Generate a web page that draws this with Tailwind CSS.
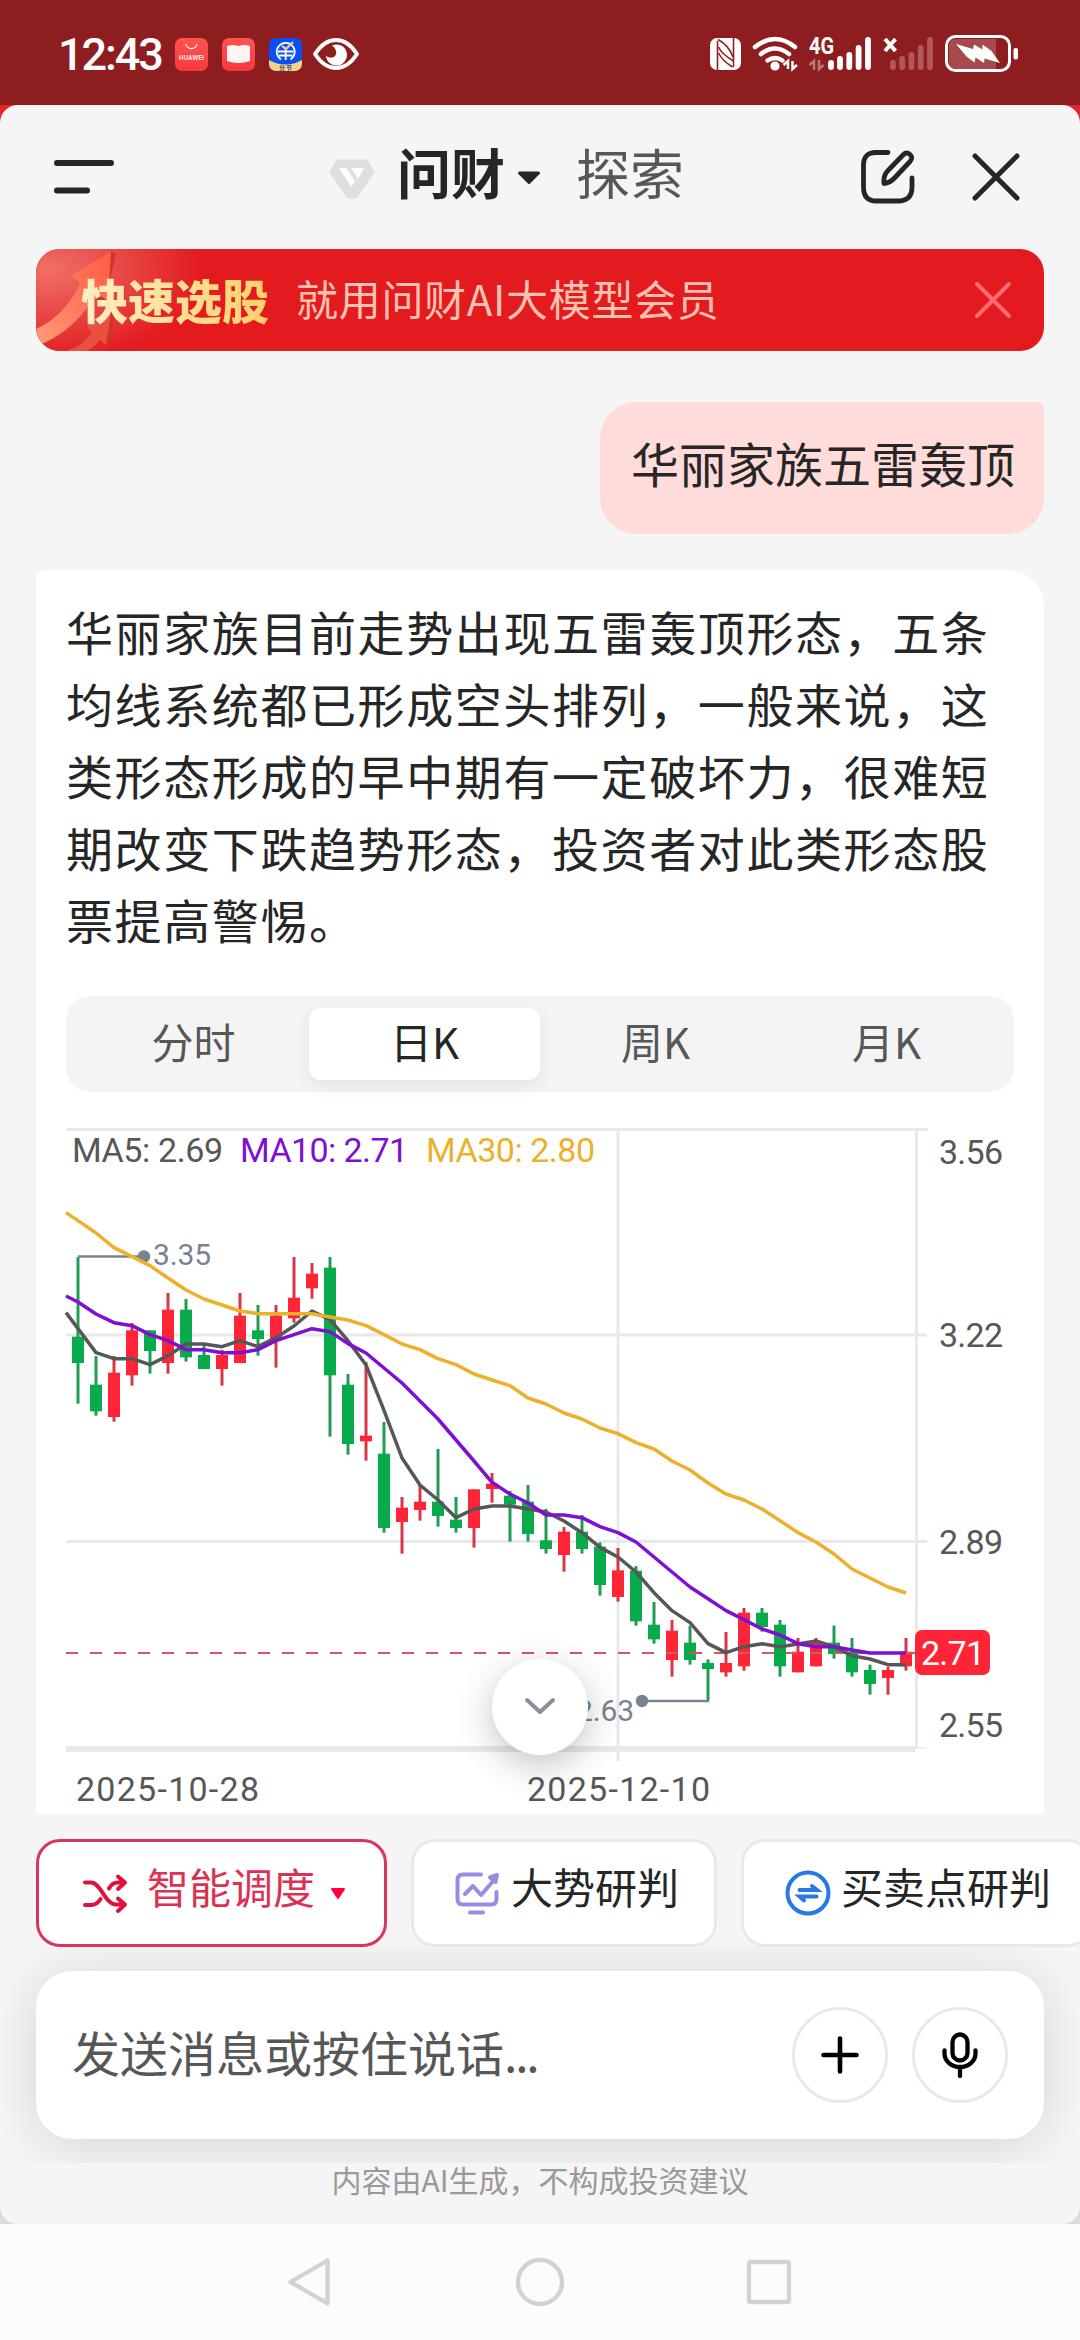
<!DOCTYPE html>
<html lang="zh-CN">
<head>
<meta charset="utf-8">
<title>问财</title>
<script src="https://cdn.jsdelivr.net/npm/@tailwindcss/browser@4"></script>
</head>
<body class="w-[1080px] h-[2340px] overflow-hidden bg-[#fcfcfc] font-['Noto_Sans_CJK_SC',sans-serif] text-[#262626] flex flex-col">

<!-- status bar -->
<header class="h-[105px] shrink-0 bg-[#8e1d20] text-white flex items-start justify-between pl-[58px] pr-[62px] pt-[32px]">
  <div class="flex items-center h-[44px]">
    <span class="w-[117px] shrink-0 font-[Roboto] font-medium text-[45px] leading-[45px] tracking-[-2.100px] whitespace-nowrap">12:43</span>
    <svg width="33" height="33" viewBox="0 0 33 33" class="shrink-0">
      <defs><linearGradient id="hw" x1="0" y1="0" x2="0" y2="1"><stop offset="0" stop-color="#ff5450"/><stop offset="1" stop-color="#f73840"/></linearGradient></defs>
      <rect width="33" height="33" rx="7" fill="url(#hw)"/><path d="M11 6a5.6 5.6 0 0 0 11 0" fill="none" stroke="#fff" stroke-width="1.2"/>
      <text x="4" y="21.500" font-family="Inter" font-weight="600" font-size="6" textLength="25" fill="#fff">HUAWEI</text>
    </svg>
    <svg width="33" height="33" viewBox="0 0 33 33" class="ml-[14px] shrink-0"><rect width="33" height="33" rx="7" fill="url(#hw)"/><path d="M5 8q6-2 11.500 0q6-2 11.500 0v15q-5 2-11.500 2q-6.500 0-11.500-2z" fill="#fff5f5"/></svg>
    <svg width="33" height="33" viewBox="0 0 33 33" class="ml-[14px] shrink-0">
      <clipPath id="bk"><rect width="33" height="33" rx="7"/></clipPath>
      <g clip-path="url(#bk)"><rect width="33" height="33" fill="#0b4ef2"/><path d="M0 22q16.500 9 33 0v11H0z" fill="#f7d486"/></g>
      <path d="M12 21.500a9 9 0 1 1 9.500 0M9 13.500h15.500M10 17.500h13.500M16.700 10v12" fill="none" stroke="#fff" stroke-width="1.800"/><path d="M13 8l4 3 7-7" fill="none" stroke="#e8cd8d" stroke-width="2.200"/>
      <text x="10" y="31.500" font-size="6" font-weight="700" textLength="13" fill="#34528e">分节</text>
    </svg>
    <svg width="46" height="32" viewBox="0 0 46 32" class="ml-[11px] shrink-0"><path d="M2 16Q11 2 23 2T44 16Q35 30 23 30T2 16Z" fill="none" stroke="#fff" stroke-width="3.800" stroke-linejoin="round"/><path d="M19 7.500A10.500 10.500 0 1 1 13 18q4 3 8 1q3.500-3 1.500-7.500q-1-2.500-3.500-4z" fill="#fff"/></svg>
  </div>
  <svg width="308" height="44" viewBox="710 32 308 44" class="shrink-0">
    <rect x="710" y="38" width="31" height="32" rx="7" fill="#fff"/>
    <path d="M717.500 41v29M733.500 38v29" stroke="#8e1d20" stroke-width="1.600"/>
    <path d="M718 39.500q11 6 15 17.500M718.500 47q3 7 15 14M718.500 53q4 8 14 14" stroke="#8e1d20" stroke-width="1.600" fill="none"/>
    <g fill="none" stroke="#fff" stroke-width="4.500" stroke-linecap="round"><path d="M755 47q20-16 40 0"/><path d="M761 54q14-11 28 0"/><path d="M767.500 60.500q7.500-5 15 0"/></g>
    <circle cx="775" cy="66" r="4.600" fill="#fff"/>
    <path d="M788 69v-8l-4.500 4M792.500 61v8l4.500-4" fill="none" stroke="#fff" stroke-width="2.500"/>
    <text x="809" y="54" font-family="Roboto" font-weight="700" font-size="23" textLength="25" lengthAdjust="spacingAndGlyphs" fill="#fff">4G</text>
    <path d="M814 70v-9l-4.500 4M819 60v9l4.500-4" fill="none" stroke="#fff" stroke-opacity=".4" stroke-width="2.500"/>
    <g stroke="#fff" stroke-width="5.800" stroke-linecap="round"><path d="M831 63v4M840 59v8M849.300 55v12M858.600 48v19M868 40v27"/><path stroke="#b1585b" d="M893 63v4M902.200 59v8M911.500 55v12M920.700 48v19M930 40v27"/></g>
    <path d="M885 39l10.500 12M895.500 39L885 51" stroke="#fff" stroke-width="4"/>
    <path d="M956 39h40v30h-40q-7 0-7-7V46q0-7 7-7z" fill="#a74a4e"/>
    <rect x="946.500" y="36.500" width="63" height="34" rx="9" fill="none" stroke="#fff" stroke-width="3"/>
    <rect x="1013.500" y="48" width="4.500" height="11.500" rx="2" fill="#fff"/>
    <path d="M956 44l17 5 1-4.500 8.500 5v-5l9 6.500 8.500 12-15.500-4.500-.5 4.500-8.500-5.500-1 5-8-6z" fill="#fff"/>
  </svg>
</header>

<div class="h-[2119px] shrink-0 bg-[linear-gradient(#e5252c_0_40px,#dcdcdc_40px)]">
<main class="h-full rounded-[18px] overflow-hidden bg-[#f5f5f5] flex flex-col">

  <!-- title bar -->
  <nav class="h-[144px] shrink-0 flex items-center pl-[54px] pr-[60px]">
    <svg width="60" height="34" viewBox="0 0 60 34" class="shrink-0"><path d="M3 3h54M3 30.500h30" stroke="#262626" stroke-width="6" stroke-linecap="round"/></svg>
    <svg width="46" height="40" viewBox="0 0 46 40" class="ml-[215px] mt-[4px] shrink-0"><path d="M9 3h28l6 10-17 24h-6L3 13z" fill="#dfdfdf" stroke="#dfdfdf" stroke-width="5" stroke-linejoin="round"/><path d="M10 9h7l9 13-3.500 6zM22 9h13l-6 11z" fill="#fff"/></svg>
    <h1 class="ml-[22px] text-[54px] leading-[80px] font-bold w-[109px] whitespace-nowrap -mt-[10px]">问财</h1>
    <svg width="24" height="14" viewBox="0 0 24 14" class="ml-[11px] mt-[1px] shrink-0"><path d="M2.500 2h19L12 11.500z" fill="#262626" stroke="#262626" stroke-width="3" stroke-linejoin="round"/></svg>
    <span class="ml-[35px] text-[54px] leading-[80px] text-[#575757] whitespace-nowrap -mt-[11px]">探索</span>
    <svg width="56" height="56" viewBox="0 0 56 56" fill="none" stroke="#262626" stroke-width="4.800" stroke-linecap="round" class="ml-auto shrink-0"><path d="M28 3.500H16Q3.500 3.500 3.500 16v22Q3.500 52 16 52h22q14 0 14-14V29"/><path d="M24 34.500q-1-8 4-13L43.500 5.500q3-3 6.500 0t0 7L35 28.500q-5 5.500-11 6z" stroke-linejoin="round"/></svg>
    <svg width="48" height="48" viewBox="0 0 48 48" class="ml-[56px] shrink-0"><path d="M3 3l42 42M45 3L3 45" stroke="#262626" stroke-width="5" stroke-linecap="round"/></svg>
  </nav>

  <!-- promo banner -->
  <section class="relative mx-[36px] h-[102px] shrink-0 rounded-[24px] overflow-hidden bg-[#e31b1f] flex items-center pl-[45px] pr-[32px]">
    <svg width="170" height="102" viewBox="0 0 170 102" class="absolute left-0 top-0">
      <defs>
        <radialGradient id="glow" cx=".08" cy=".2" r=".9"><stop offset="0" stop-color="#f07066"/><stop offset=".45" stop-color="#e84a48"/><stop offset="1" stop-color="#e31b1f"/></radialGradient>
        <linearGradient id="arr" x1="0" y1="1" x2="1" y2="0"><stop offset="0" stop-color="#ff9a78"/><stop offset="1" stop-color="#ff5a41"/></linearGradient>
      </defs>
      <rect width="170" height="102" fill="url(#glow)"/>
      <path d="M7 96Q32 82 54 45l14 12 12-52-5-3z" fill="#c9382a"/>
      <path d="M0 80Q30 66 44 34l-9-7L75 2l-3 50-11-8Q40 80 6 95L0 88z" fill="url(#arr)"/>
      <path d="M30 102q15-4 26-18l-5-6 26-24-7 42-6-5q-7 8-13 11z" fill="#e9503e"/><path d="M70 95l3-1 8-40-4 0z" fill="#c9382a"/>
    </svg>
    <b class="relative font-black text-[47px] leading-[60px] -mt-[3px] bg-[linear-gradient(90deg,#ffefc4,#ffd06a)] bg-clip-text text-transparent whitespace-nowrap">快速选股</b>
    <span class="ml-[27px] -mt-[4px] text-[42px] leading-[60px] tracking-[0.700px] text-[#ffc2b0] whitespace-nowrap">就用问财AI大模型会员</span>
    <svg width="38" height="38" viewBox="0 0 38 38" class="ml-auto"><path d="M3 3l32 32M35 3L3 35" stroke="#ff6b72" stroke-width="4" stroke-linecap="round"/></svg>
  </section>

  <!-- user message -->
  <div class="mt-[51px] mr-[36px] self-end w-[444px] h-[132px] shrink-0 rounded-[36px] rounded-tr-[6px] bg-[#ffdbda] pl-[31px] text-[48px] leading-[121px] whitespace-nowrap">华丽家族五雷轰顶</div>

  <!-- reply card -->
  <article class="relative mt-[36px] mx-[36px] h-[1244px] shrink-0 bg-white rounded-tl-[6px] rounded-tr-[36px]">
    <p class="pt-[25px] pl-[30px] text-[47px] leading-[72px] tracking-[1.600px] whitespace-nowrap">华丽家族目前走势出现五雷轰顶形态，五条<br>均线系统都已形成空头排列，一般来说，这<br>类形态形成的早中期有一定破坏力，很难短<br>期改变下跌趋势形态，投资者对此类形态股<br>票提高警惕。</p>
    <div class="mt-[41px] mx-[30px] h-[96px] rounded-[24px] bg-[#f4f4f4] p-[12px] grid grid-cols-4 text-center text-[42px] leading-[65px] text-[#575757]">
      <span>分时</span><span class="rounded-[12px] bg-white text-[#262626] shadow-[0_6px_18px_rgba(0,0,0,0.07)]">日K</span><span>周K</span><span>月K</span>
    </div>
    <svg id="chart" width="1008" height="712" viewBox="36 1102 1008 712" class="mt-[10px] block" font-family="Roboto" fill="none">
      <g stroke="#e9e9e9" stroke-width="3">
        <path d="M66 1129.500H928M66 1335H927M66 1541.500H927M618 1129V1761M916.500 1129V1748"/>
        <path d="M66 1749H915" stroke-width="6"/><path d="M915 1748h12" stroke-width="1.500"/>
      </g>
      <g id="candles"></g>
      <g stroke="#788392" stroke-width="2.500" fill="#788392"><path d="M78 1256.500h66"/><circle cx="144" cy="1256.500" r="5"/><path d="M642 1701h67"/><circle cx="642" cy="1701" r="5"/></g>
      <path d="M66 1653H915" stroke="#d75460" stroke-width="2" stroke-dasharray="12 12"/>
      <g id="averages" stroke-width="3.500" stroke-linejoin="round"></g>
      <g font-size="30" fill="#788392"><text x="153" y="1265" textLength="58">3.35</text><text x="576" y="1720.500" textLength="58">2.63</text></g>
      <rect x="915" y="1630" width="75" height="45" rx="7" fill="#ff2436"/>
      <g font-size="34" fill="#575757">
        <text x="72" y="1162" textLength="151">MA5: 2.69</text>
        <text x="240" y="1162" textLength="168" fill="#7f0fd2">MA10: 2.71</text>
        <text x="426" y="1162" textLength="169" fill="#edb02b">MA30: 2.80</text>
        <text x="939" y="1164" textLength="64">3.56</text><text x="939" y="1347" textLength="64">3.22</text>
        <text x="939" y="1554" textLength="64">2.89</text><text x="939" y="1737" textLength="64">2.55</text>
        <text x="921" y="1665" textLength="64" fill="#fff">2.71</text>
        <text x="76" y="1801" textLength="183">2025-10-28</text><text x="527" y="1801" textLength="183">2025-12-10</text>
      </g>
    </svg>
    <button class="absolute left-[456px] top-[1089px] w-[96px] h-[96px] rounded-full bg-white shadow-[0_10px_36px_rgba(0,0,0,0.24)] flex items-center justify-center"><svg width="32" height="20" viewBox="0 0 32 20"><path d="M3 3l13 12L29 3" fill="none" stroke="#8a8f99" stroke-width="4" stroke-linecap="round" stroke-linejoin="round"/></svg></button>
  </article>

  <!-- quick actions -->
  <div class="pt-[25px] pl-[36px] flex gap-[24px] shrink-0 text-[42px] leading-[88px] whitespace-nowrap overflow-hidden">
    <div class="box-border w-[351px] h-[108px] shrink-0 rounded-[24px] border-3 border-[#d8365a] bg-white flex text-[#dc3150] pl-[43px]">
      <svg width="46" height="42" viewBox="0 0 46 42" class="mt-[31px] shrink-0" fill="none" stroke="#e0103f" stroke-width="4" stroke-linecap="round" stroke-linejoin="round"><path d="M3 9.500h6c10 0 14 22 25 22h8M3 32h6q6 0 9.500-6M27 15.500q3-6 9-6h6M36 3.500l7 6-7 6.500M36 25.500l7 6-7 6.500"/></svg>
      <span class="ml-[19px] w-[166px]">智能调度</span>
      <svg width="16" height="13" viewBox="0 0 16 13" class="ml-[17px] mt-[45px] shrink-0"><path d="M2 2h12L8 11z" fill="#ff003c" stroke="#ff003c" stroke-width="2" stroke-linejoin="round"/></svg>
    </div>
    <div class="w-[306px] h-[108px] shrink-0 rounded-[24px] border-3 border-[#e9e9e9] bg-white flex pl-[41px]">
      <svg width="45" height="44" viewBox="0 0 45 44" class="mt-[29px] shrink-0" fill="none" stroke="#988be2" stroke-width="4" stroke-linecap="round" stroke-linejoin="round"><path d="M26 3.500H8Q2.500 3.500 2.500 9v19q0 5.500 5.500 5.500h28q5.500 0 5.500-5.500v-7M15 41.500h13M10 23l8-8 8 9L40 8"/><path d="M42 4l-1.500 7-5.500-4.500z" fill="#988be2"/></svg>
      <span class="ml-[11px]">大势研判</span>
    </div>
    <div class="w-[351px] h-[108px] shrink-0 rounded-[24px] border-3 border-[#e9e9e9] bg-white flex pl-[41px]">
      <svg width="46" height="46" viewBox="0 0 46 46" class="mt-[28px] shrink-0" fill="none" stroke="#2878e6" stroke-width="4" stroke-linecap="round"><circle cx="23" cy="23" r="20.500"/><path d="M14.500 20h17.500l-5-4M31.500 26.500H14.500l4.500 4"/></svg>
      <span class="ml-[10px]">买卖点研判</span>
    </div>
  </div>

  <!-- composer -->
  <div class="h-[216px] shrink-0 overflow-hidden px-[36px] py-[24px]">
    <div class="h-[168px] rounded-[36px] bg-white shadow-[0_6px_54px_rgba(0,0,0,0.13)] flex items-center gap-[24px] pl-[36px] pr-[36px]">
      <span class="flex-1 text-[48px] leading-[72px] text-[#575757] whitespace-nowrap -mt-[8px]">发送消息或按住说话<span class="tracking-[-2.200px]">...</span></span>
      <button class="w-[96px] h-[96px] rounded-full border-3 border-[#e9e9e9] flex items-center justify-center"><svg width="38" height="38" viewBox="0 0 38 38"><path d="M19 2.500v33M2.500 19h33" stroke="#000" stroke-width="4.600" stroke-linecap="round"/></svg></button>
      <button class="w-[96px] h-[96px] rounded-full border-3 border-[#e9e9e9] flex items-center justify-center"><svg width="36" height="46" viewBox="0 0 36 46" fill="none" stroke="#000" stroke-width="4.300" stroke-linecap="round"><rect x="10.500" y="2.500" width="15" height="26" rx="7.500"/><path d="M2.500 18.500v3a15.500 13.500 0 0 0 31 0v-3M18 36v8"/></svg></button>
    </div>
  </div>
  <p class="text-center text-[30px] leading-[33px] text-[#999]">内容由AI生成，不构成投资建议</p>
</main>
</div>

<!-- system navigation -->
<footer class="flex-1 flex items-center justify-center">
  <svg width="504" height="50" viewBox="288 2257 504 50" fill="none" stroke="#d2d2d2" stroke-width="4.300" stroke-linejoin="round"><path d="M290.500 2282L327.500 2260.500V2303.500Z"/><circle cx="540" cy="2282" r="22"/><rect x="749" y="2262" width="40" height="40" rx="1.500"/></svg>
</footer>

<script>
const ns = 'http://www.w3.org/2000/svg';
const X = i => 78 + 18 * i, Y = v => 1110 + v / 3;
const add = (id, tag, a) => { const e = document.createElementNS(ns, tag); for (const k in a) e.setAttribute(k, a[k]); document.getElementById(id).append(e); };
// direction, high, low, body top, body bottom
const candles = [
['g',441,881,680,759],['g',738,917,824,904],['r',738,935,788,921],['r',639,827,661,796],['g',661,791,661,723],['r',549,791,599,759],['g',567,755,599,742],['g',705,777,735,777],['r',720,827,735,777],['r',549,759,617,759],
['g',585,737,661,687],['r',585,773,617,690],['r',441,638,563,625],['r',459,566,491,535],['g',441,980,473,796],['g',792,1034,824,1002],['r',756,1052,977,994],['g',936,1268,1031,1254],['r',1161,1331,1193,1236],['r',1125,1232,1175,1200],
['g',1017,1250,1175,1218],['g',1161,1268,1229,1254],['r',1138,1313,1138,1254],['r',1089,1178,1121,1137],['g',1143,1295,1157,1184],['g',1125,1295,1175,1272],['g',1197,1331,1291,1317],['r',1251,1385,1265,1335],['g',1215,1331,1265,1317],['g',1297,1457,1310,1425],
['r',1314,1475,1381,1461],['g',1368,1547,1382,1534],['g',1476,1601,1544,1588],['r',1530,1700,1562,1650],['g',1547,1664,1598,1650],['g',1648,1772,1659,1677],['r',1566,1700,1659,1687],['r',1494,1682,1508,1669],['g',1494,1565,1508,1551],['g',1530,1700,1544,1669],
['r',1584,1687,1625,1687],['r',1584,1669,1595,1669],['g',1547,1646,1598,1632],['g',1584,1700,1625,1687],['g',1664,1754,1680,1722],['r',1670,1754,1680,1704],['r',1584,1682,1625,1669]];
candles.forEach(([c, h, l, t, b], i) => {
  add('candles', 'path', { d: `M${X(i)} ${Y(h)}V${Y(l)}`, stroke: c === 'g' ? '#229c55' : '#d53844', 'stroke-width': 3 });
  add('candles', 'rect', { x: X(i) - 6, y: Y(t), width: 12, height: (b - t) / 3, fill: c === 'g' ? '#08ab4b' : '#ff2436' });
});
const lines = {
'#575757': [608,656,728,746,746,764,737,702,702,710,692,710,683,648,603,629,692,765,901,1044,1125,1170,1223,1197,1188,1188,1197,1206,1233,1268,1312,1341,1386,1448,1502,1538,1601,1628,1610,1601,1610,1602,1593,1610,1637,1647,1664,1664],
'#7f0fd2': [558,576,612,638,647,674,692,719,719,728,728,719,692,674,656,665,701,729,774,819,873,927,990,1053,1117,1152,1179,1215,1215,1223,1250,1268,1296,1341,1386,1431,1466,1502,1529,1557,1575,1601,1610,1610,1620,1629,1629,1629],
'#edb02b': [308,332,369,413,440,467,504,540,567,585,603,611,611,611,611,621,630,647,674,702,719,746,764,792,810,827,864,882,909,927,954,971,998,1017,1053,1080,1119,1152,1170,1197,1232,1268,1296,1332,1377,1404,1431,1449]};
for (const c in lines) add('averages', 'polyline', { stroke: c, points: lines[c].map((v, i) => (i ? X(i - 1) : 66) + ',' + Y(v)).join(' ') });
</script>
</body>
</html>
